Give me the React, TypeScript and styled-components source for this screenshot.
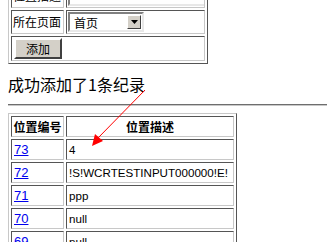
import React from 'react'
import styled, { createGlobalStyle } from 'styled-components'

const GlobalStyle = createGlobalStyle`
  html, body {
    margin: 0;
    padding: 0;
    background: #ffffff;
    overflow: hidden;
  }
  body {
    font-family: "Liberation Sans", "Noto Sans CJK SC", sans-serif;
    font-size: 12px;
    color: #000;
  }
`

const Page = styled.div`
  position: relative;
  padding: 0 0 0 8px;
  margin-top: -19px;
`

const Grid = styled.table<{ $width: number }>`
  width: ${(p) => p.$width}px;
  table-layout: fixed;
  border-collapse: separate;
  border-spacing: 2px;
  border: 1px solid;
  border-color: #c8c8c8 #555555 #555555 #c8c8c8;
`

const Cell = styled.td<{ $w?: number; $h?: number }>`
  border: 1px solid;
  border-color: #555555 #c8c8c8 #c8c8c8 #555555;
  padding: 1px 1px;
  height: ${(p) => p.$h ?? 17}px;
  ${(p) => (p.$w ? `width: ${p.$w}px;` : '')}
  vertical-align: middle;
  white-space: nowrap;
  overflow: hidden;
`

const Label = styled.span`
  font-family: "Noto Sans CJK SC", sans-serif;
  font-size: 12px;
  line-height: 14px;
`

const HeadCell = styled(Cell)`
  font-family: "Noto Sans CJK SC", sans-serif;
  font-weight: bold;
  text-align: center;
  font-size: 12px;
  height: 17px;
`

const TextInput = styled.div`
  height: 16px;
  width: 136px;
  border: 2px solid;
  border-color: #808080 #e8e8e8 #e8e8e8 #808080;
  background: #fff;
`

const Select = styled.div`
  display: inline-flex;
  align-items: center;
  justify-content: space-between;
  width: 76px;
  height: 20px;
  box-sizing: border-box;
  border: 2px solid;
  border-color: #808080 #e8e8e8 #e8e8e8 #808080;
  background: #fff;
  font-family: "Noto Sans CJK SC", sans-serif;
  font-size: 12px;
  padding-left: 4px;
`

const SelectArrow = styled.span`
  display: flex;
  align-items: center;
  justify-content: center;
  width: 14px;
  height: 14px;
  margin-right: 1px;
  box-sizing: border-box;
  background: #d4d0c8;
  border: 1px solid;
  border-color: #ffffff #404040 #404040 #ffffff;
`

const Button = styled.button`
  font-family: "Noto Sans CJK SC", sans-serif;
  font-size: 12px;
  width: 48px;
  height: 21px;
  padding: 0;
  margin: 0 0 0 1px;
  background: #d4d0c8;
  border: 2px solid;
  border-color: #ffffff #404040 #404040 #ffffff;
  color: #000;
  line-height: 15px;
`

const Message = styled.div`
  font-family: "Noto Sans CJK SC", sans-serif;
  font-size: 16px;
  line-height: 22px;
  margin: 9px 0 0 0;
`

const Rule = styled.hr`
  margin: 9px 0 7px 0;
  height: 0;
  border: 0;
  border-top: 1px solid #6e6e6e;
  border-bottom: 1px solid #c8c8c8;
`

const NumLink = styled.a`
  color: #0000ee;
  text-decoration: underline;
  font-size: 13px;
  padding-left: 1px;
`

const Value = styled.span`
  font-size: 11.6px;
  padding-left: 1px;
`

const Arrow = styled.svg`
  position: absolute;
  left: 0;
  top: 0;
  pointer-events: none;
`

const rows = [
  { id: '73', desc: '4' },
  { id: '72', desc: '!S!WCRTESTINPUT000000!E!' },
  { id: '71', desc: 'ppp' },
  { id: '70', desc: 'null' },
  { id: '69', desc: 'null' },
]

export default function App() {
  return (
    <>
      <GlobalStyle />
      <Page>
        <Grid $width={200}>
          <tbody>
            <tr>
              <Cell $w={49} $h={20}>
                <Label>位置描述</Label>
              </Cell>
              <Cell $h={20}>
                <TextInput />
              </Cell>
            </tr>
            <tr>
              <Cell $w={49} $h={20}>
                <Label>所在页面</Label>
              </Cell>
              <Cell $h={20}>
                <Select>
                  首页
                  <SelectArrow>
                    <svg width="7" height="4" viewBox="0 0 7 4">
                      <polygon points="0,0 7,0 3.5,4" fill="#000" />
                    </svg>
                  </SelectArrow>
                </Select>
              </Cell>
            </tr>
            <tr>
              <Cell colSpan={2} $h={20}>
                <Button>添加</Button>
              </Cell>
            </tr>
          </tbody>
        </Grid>
        <Message>成功添加了1条纪录</Message>
        <Rule />
        <Grid $width={229}>
          <tbody>
            <tr>
              <HeadCell $w={49}>位置编号</HeadCell>
              <HeadCell>位置描述</HeadCell>
            </tr>
            {rows.map((r) => (
              <tr key={r.id}>
                <Cell $w={49}>
                  <NumLink href="#">{r.id}</NumLink>
                </Cell>
                <Cell>
                  <Value>{r.desc}</Value>
                </Cell>
              </tr>
            ))}
          </tbody>
        </Grid>
        <Arrow width="327" height="260" viewBox="0 0 327 260">
          <line x1="145" y1="109" x2="98" y2="157" stroke="#ff0000" strokeWidth="1" />
          <polygon points="92,165 95,153 103,160" fill="#ff0000" />
        </Arrow>
      </Page>
    </>
  )
}
